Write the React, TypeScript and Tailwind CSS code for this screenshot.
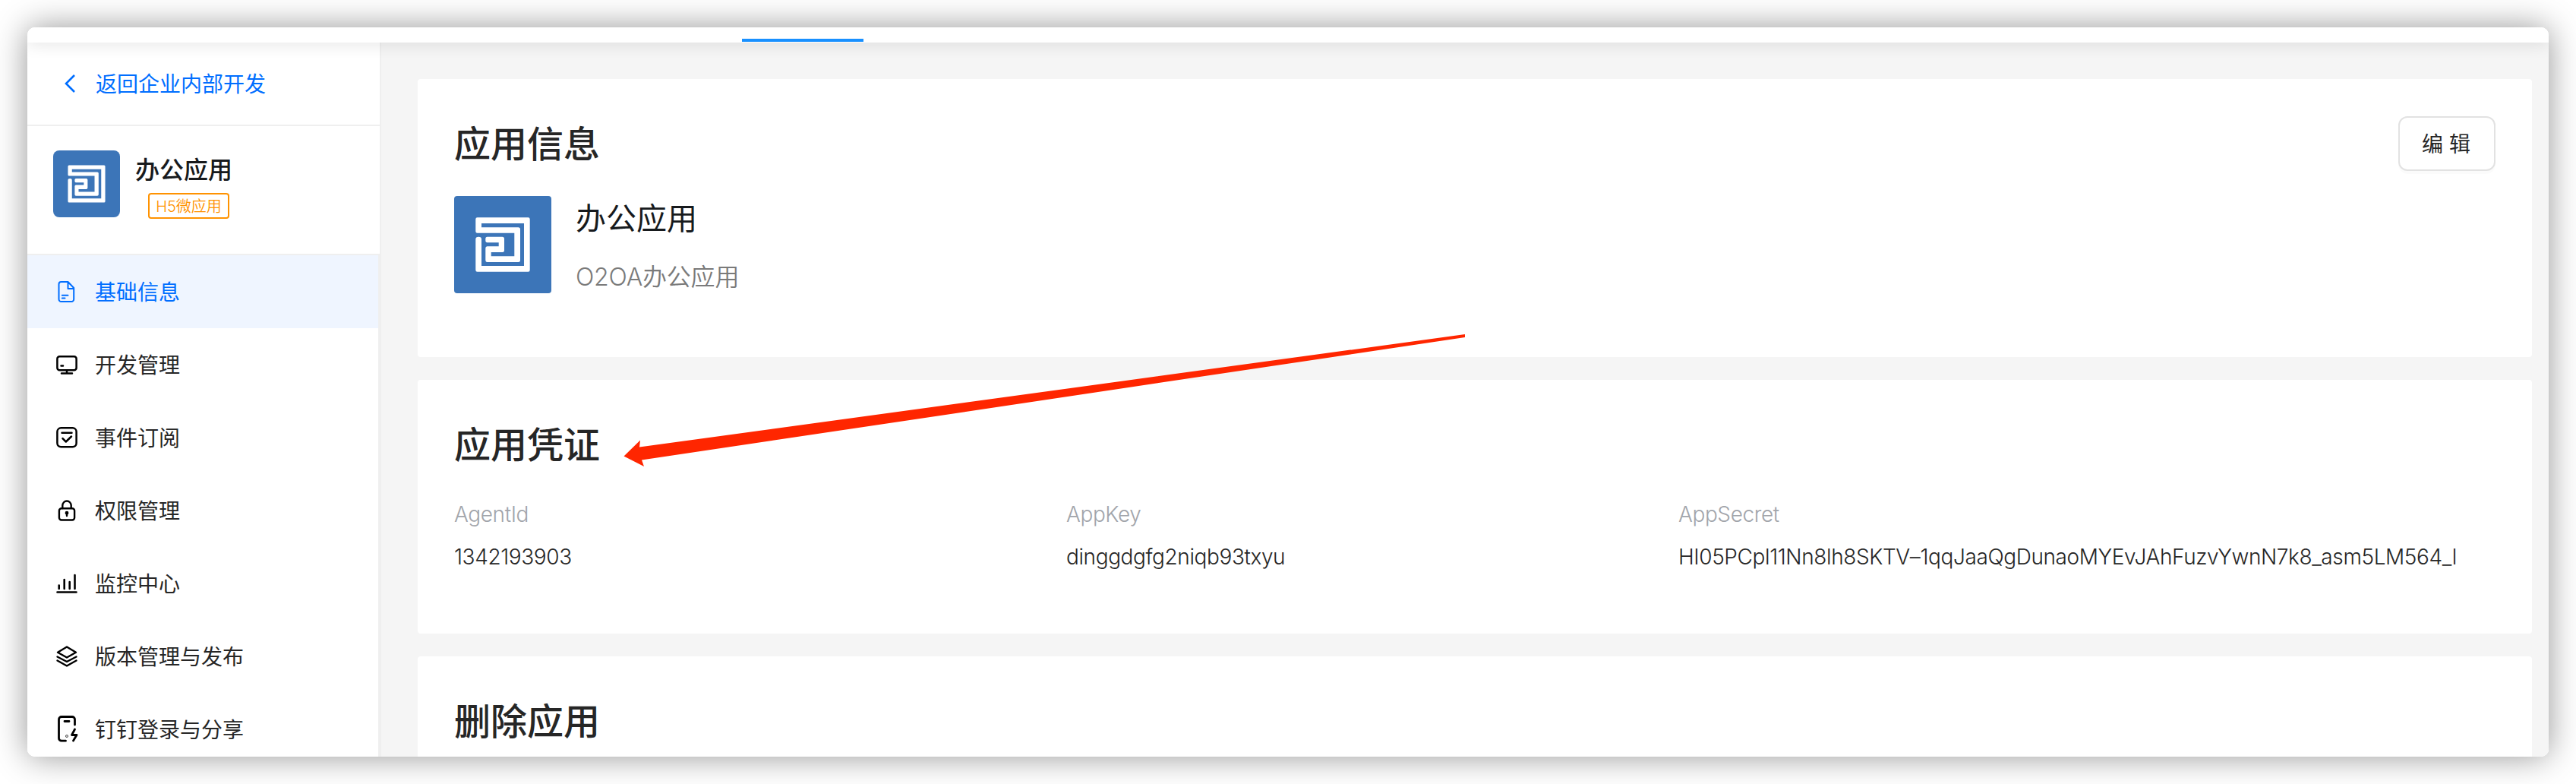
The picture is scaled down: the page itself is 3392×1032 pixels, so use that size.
import React from 'react';

const Logo = ({ className }: { className: string }) => (
  <div className={`flex shrink-0 items-center justify-center bg-[#3c75b8] ${className}`}>
    <svg viewBox="0 0 128 128" className="size-full" fill="#fff">
      <path fillRule="evenodd" d="M30.500 28.300H97.500Q99.700 28.300 99.700 30.500V97.500Q99.700 99.700 97.500 99.700H30.500Q28.300 99.700 28.300 97.500V57Q28.300 53.700 32.200 53.700Q36 53.700 36 57V92H92V36H36V41.300H84.500Q87 41.300 87 43.800V84.500Q87 87 84.500 87H43.500Q41.300 87 41.300 84.500V68.800Q41.300 66.300 43.500 66.300H58.700V61.300H43.500Q41.300 61.300 41.300 58.500V56.500Q41.300 53.700 43.500 53.700H63.500Q66 53.700 66 56.200V71.500Q66 74 63.500 74H48.700V79.300H79.300V48.700H30.500Q28.300 48.700 28.300 46.500V30.500Q28.300 28.300 30.500 28.300Z" />
    </svg>
  </div>
);

const Icon = ({ children, w = 2 }: { children: React.ReactNode; w?: number }) => (
  <svg viewBox="0 0 32 36" className="h-9 w-8 shrink-0" fill="none" stroke="currentColor" strokeWidth={w} strokeLinecap="round" strokeLinejoin="round">
    {children}
  </svg>
);

const menu = [
  {
    label: '基础信息',
    active: true,
    icon: (
      <Icon w={2}>
        <path d="M8.500 5H17.500L25.200 13V28a3 3 0 0 1-3 3H8.500a3 3 0 0 1-3-3V8a3 3 0 0 1 3-3ZM17.500 5V14H25.200M9.800 22.700H17.500M9.800 26.500H13.500" />
      </Icon>
    ),
  },
  {
    label: '开发管理',
    icon: (
      <Icon w={2.5}>
        <rect x="3.400" y="7.300" width="25.200" height="18" rx="3" />
        <path d="M8.500 19.500H11M16 26V29M9 29.500H23" />
      </Icon>
    ),
  },
  {
    label: '事件订阅',
    icon: (
      <Icon w={2.5}>
        <rect x="3.400" y="5.300" width="25.200" height="25" rx="5" />
        <path d="M9.500 11.700H22.500M10.500 19.200L14.800 23.500L22 16.500" />
      </Icon>
    ),
  },
  {
    label: '权限管理',
    icon: (
      <Icon w={2.4}>
        <rect x="5.900" y="15.200" width="20.200" height="15.300" rx="3" />
        <path d="M10.300 15V11.500a5.700 6 0 0 1 11.400 0V15M16 21.500V25" />
        <circle cx="16" cy="21.200" r="1.200" fill="currentColor" />
      </Icon>
    ),
  },
  {
    label: '监控中心',
    icon: (
      <Icon w={2.6}>
        <path d="M3.500 29.500H28.500M5.700 20.500V25M12.700 13V25M19.700 16V25M26.500 7V25" />
      </Icon>
    ),
  },
  {
    label: '版本管理与发布',
    icon: (
      <Icon w={2.4}>
        <path d="M16 5.500L28 12.700L16 19.500L4 12.700ZM3.500 18.500L16 25L28.500 18.500M3.500 23.500L16 30.500L28.500 23.500" />
      </Icon>
    ),
  },
  {
    label: '钉钉登录与分享',
    icon: (
      <Icon w={2.8}>
        <path d="M14.500 33.200H9a3.500 3.500 0 0 1-3.500-3.500V5a3.500 3.500 0 0 1 3.500-3.500H23a3.500 3.500 0 0 1 3.500 3.500V12M13 7.500H19" />
        <circle cx="16" cy="27" r="0.400" />
        <path d="M26.500 18L22.500 25.500H29L24.500 33" />
      </Icon>
    ),
  },
];

const credentials = [
  { label: 'AgentId', value: '1342193903' },
  { label: 'AppKey', value: 'dinggdgfg2niqb93txyu' },
  { label: 'AppSecret', value: 'HI05PCpl11Nn8lh8SKTV–1qqJaaQgDunaoMYEvJAhFuzvYwnN7k8_asm5LM564_l' },
];

const Title = ({ children }: { children: React.ReactNode }) => (
  <h2 className="text-[48px] leading-[64px] font-medium text-[#262626]">{children}</h2>
);

export default function App() {
  return (
    <div className="h-[1032px] w-[3392px] overflow-hidden bg-white p-9 font-[Inter,'Noto_Sans_CJK_SC',sans-serif]">
      <div className="h-[960px] rounded-[10px] shadow-[0_0_44px_rgba(0,0,0,0.42)]">
        <div className="relative flex h-full flex-col overflow-hidden rounded-[10px] bg-white">
          <header className="relative z-10 h-5 shrink-0 bg-white pt-[15px] pl-[941px] shadow-[0_2px_22px_rgba(0,0,0,0.11)]">
            <div className="h-1 w-40 bg-[#1890ff]" />
          </header>
          <div className="flex min-h-0 flex-1">
            <aside className="flex w-[466px] shrink-0 flex-col border-r-2 border-[#efefef] bg-white">
              <div className="flex h-[110px] items-center gap-[27px] border-b-2 border-[#efefef] pl-[49px] text-[28px] text-[#006eff]">
                <svg viewBox="0 0 14 24" className="h-6 w-[14px]" fill="none" stroke="currentColor" strokeWidth="2.600">
                  <path d="M13 1L2 12L13 23" />
                </svg>
                <span className="pt-px leading-9">返回企业内部开发</span>
              </div>
              <div className="flex h-[170px] gap-5 border-b-2 border-[#efefef] pt-8 pl-[34px]">
                <Logo className="size-[88px] rounded-lg" />
                <div className="flex flex-col">
                  <div className="h-[56px] pt-0.5 text-[32px] leading-[48px] font-medium text-[#171a1d]">办公应用</div>
                  <div className="ml-[17px] flex h-[34px] w-[107px] items-center justify-center rounded border-2 border-[#ff9200] pt-0.5 text-[20px] leading-none font-[350] text-[#ff9200]">H5微应用</div>
                </div>
              </div>
              <nav className="flex-1 overflow-hidden border-r-2 border-[#efefef]">
                {menu.map((m) => (
                  <div key={m.label} className={`flex h-24 items-center gap-[21px] pl-9 ${m.active ? 'bg-[#eff5ff] text-[#006eff]' : 'text-black'}`}>
                    {m.icon}
                    <span className={`pt-px text-[28px] leading-9 ${m.active ? '' : 'text-[#262626]'}`}>{m.label}</span>
                  </div>
                ))}
              </nav>
            </aside>
            <main className="flex flex-1 flex-col gap-[30px] bg-[#f5f5f5] pt-12 pr-[22px] pl-12">
              <section className="flex h-[366px] shrink-0 justify-between rounded bg-white pt-[49px] pr-12 pl-12">
                <div>
                  <div className="pt-[5px]">
                    <Title>应用信息</Title>
                  </div>
                  <div className="mt-9 flex gap-8">
                    <Logo className="size-32 rounded" />
                    <div>
                      <div className="pt-0.5 text-[40px] leading-[56px] text-[#171a1d]">办公应用</div>
                      <div className="mt-[25px] text-[32px] leading-[48px] font-[350] tracking-[-0.2px] text-[#7a7a7a]">O2OA办公应用</div>
                    </div>
                  </div>
                </div>
                <button className="flex h-[72px] w-32 items-center justify-center rounded-xl border-2 border-[#e2e2e2] bg-white pt-0.5 pr-0.5 text-[28px] text-[#262626] shadow-[0_4px_0_rgba(0,0,0,0.016)]">编&nbsp;辑</button>
              </section>
              <section className="h-[334px] shrink-0 rounded bg-white px-12 pt-[54px]">
                <Title>应用凭证</Title>
                <dl className="mt-[37px] grid grid-cols-[806px_806px_1fr] text-[28px] leading-[44px] font-[350] tracking-[-0.4px]">
                  {credentials.map((c) => (
                    <div key={c.label}>
                      <dt className="text-[#a2a5ab]">{c.label}</dt>
                      <dd className="mt-3 whitespace-nowrap text-[#262626]">{c.value}</dd>
                    </div>
                  ))}
                </dl>
              </section>
              <section className="h-[200px] shrink-0 rounded bg-white px-12 pt-[54px]">
                <Title>删除应用</Title>
              </section>
            </main>
          </div>
          <svg viewBox="0 0 3320 960" className="pointer-events-none absolute inset-0 z-20 size-full" fill="#ff2600">
            <path d="M785.500 564.500L807 543.500L806 552.500L1893 404L1893 408L809 569.500L812 578Z" />
          </svg>
        </div>
      </div>
    </div>
  );
}
